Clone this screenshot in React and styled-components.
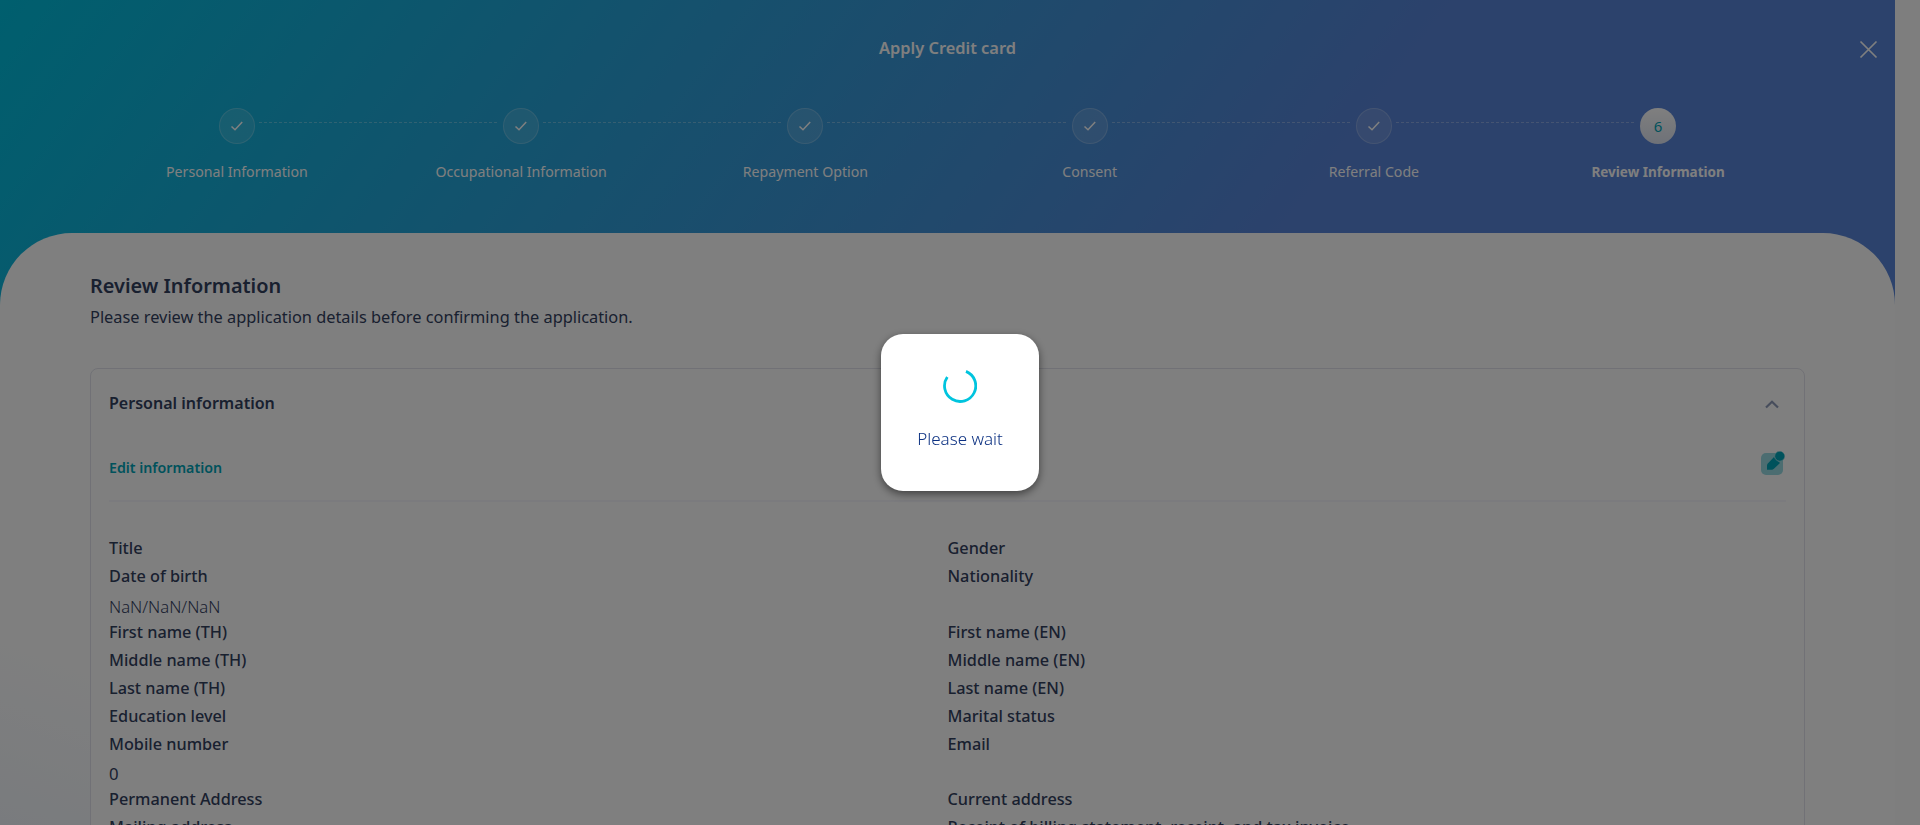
import React from 'react';
import styled, { createGlobalStyle } from 'styled-components';

const GlobalStyle = createGlobalStyle`
  *, *::before, *::after { box-sizing: border-box; }
  html, body { margin: 0; height: 100%; overflow: hidden; }
  body {
    font-family: "Noto Sans", "Open Sans", sans-serif;
    color: #33415f;
    background: #fcfcfc;
  }
`;

const Page = styled.div`
  height: 825px;
  padding-right: 25px;
  overflow: hidden;
`;

const Content = styled.div`
  height: 825px;
  overflow: hidden;
  background: linear-gradient(127deg, #00bedc 0%, #5884d8 68%) top / 100% 320px no-repeat, #fff;
`;

const Header = styled.header`
  height: 233px;
  padding-top: 35px;
  color: #fff;
`;

const TopBar = styled.div`
  display: grid;
  grid-template-columns: 60px 1fr 60px;
  align-items: center;
  height: 26px;
`;

const PageTitle = styled.h1`
  grid-column: 2;
  margin: 0;
  font-size: 16.4px;
  line-height: 24px;
  font-weight: 600;
  text-align: center;
`;

const CloseButton = styled.button`
  display: flex;
  justify-self: end;
  margin-right: 17px;
  margin-top: 2px;
  padding: 0;
  border: 0;
  background: none;
  color: #fff;
`;

const Steps = styled.ol`
  display: flex;
  margin: 47px 5% 0;
  padding: 0;
  list-style: none;
`;

const Step = styled.li`
  flex: 1;
  display: grid;
  grid-template-columns: 1fr 36px 1fr;
`;

const StepLine = styled.span`
  height: 1px;
  margin-top: 14px;
  margin-left: ${p => (p.$after ? '4px' : '0')};
  margin-right: ${p => (p.$after ? '0' : '4px')};
  background: ${p => (p.$hidden ? 'none' : 'repeating-linear-gradient(90deg, rgba(255,255,255,.3) 0 3px, transparent 3px 5px)')};
`;

const StepCircle = styled.span`
  width: 36px;
  height: 36px;
  display: flex;
  align-items: center;
  justify-content: center;
  border-radius: 50%;
  border: 1px solid ${p => (p.$active ? 'transparent' : 'rgba(255,255,255,.2)')};
  background: ${p => (p.$active ? 'linear-gradient(#fff, #dde3f0) border-box' : 'rgba(255,255,255,.12)')};
  color: ${p => (p.$active ? '#00a5b8' : '#fff')};
  font-size: 15px;
`;

const StepLabel = styled.span`
  grid-column: 1 / -1;
  margin-top: 17.5px;
  font-size: ${p => (p.$active ? '13.5px' : '14.15px')};
  font-weight: ${p => (p.$active ? 700 : 400)};
  line-height: 20px;
  text-align: center;
  white-space: nowrap;
`;

const Sheet = styled.main`
  height: 700px;
  padding: 38px 90px 0;
  border-radius: 72px 72px 0 0;
  background: linear-gradient(to top right, #f3f7fc 8%, #fff 22%);
`;

const Heading = styled.h2`
  margin: 0;
  font-size: 19.9px;
  font-weight: 600;
  line-height: 30px;
`;

const Intro = styled.p`
  margin: 2px 0 37px;
  font-size: 16.35px;
  line-height: 28px;
`;

const Card = styled.section`
  height: 600px;
  padding: 20px 18px 0;
  border: 1px solid #e2e3ec;
  border-radius: 8px;
  background: #fff;
`;

const CardHeader = styled.div`
  display: flex;
  justify-content: space-between;
  align-items: center;
  height: 28px;
  padding-right: 7px;
`;

const CardTitle = styled.h3`
  margin: 0;
  font-size: 16.05px;
  font-weight: 600;
  line-height: 28px;
`;

const EditRow = styled.div`
  display: flex;
  justify-content: space-between;
  height: 85px;
  padding-top: 34px;
  border-bottom: 2px solid #f7f7fd;
`;

const EditLink = styled.a`
  margin-top: 5px;
  color: #00a5b8;
  font-size: 14.2px;
  font-weight: 600;
  line-height: 24px;
`;

const Fields = styled.dl`
  display: grid;
  grid-template-columns: 1fr 1fr;
  align-items: start;
  margin: 32px 0 0;
`;

const Field = styled.div`
  font-size: 16.26px;
  line-height: 28px;
`;

const FieldLabel = styled.dt`
  font-weight: 500;
`;

const FieldValue = styled.dd`
  height: 27.5px;
  margin: 0;
  padding-top: 2.5px;
  font-size: 16.7px;
  font-weight: ${p => (p.$light ? 300 : 400)};
`;

const Overlay = styled.div`
  position: fixed;
  inset: 0;
  display: flex;
  align-items: center;
  justify-content: center;
  background: rgba(0, 0, 0, 0.5);
`;

const Dialog = styled.div`
  width: 158px;
  height: 157px;
  display: flex;
  flex-direction: column;
  align-items: center;
  padding-top: 35px;
  border-radius: 22px;
  background: #fff;
  box-shadow: 0 3px 9px rgba(0, 0, 0, 0.5);
`;

const DialogText = styled.p`
  margin: 22px 0 0;
  color: #0c3182;
  font-size: 17px;
  font-weight: 300;
  line-height: 28px;
`;

const steps = ['Personal Information', 'Occupational Information', 'Repayment Option', 'Consent', 'Referral Code', 'Review Information'];

const fields = [
  ['Title'], ['Gender'],
  ['Date of birth', 'NaN/NaN/NaN', true], ['Nationality'],
  ['First name (TH)'], ['First name (EN)'],
  ['Middle name (TH)'], ['Middle name (EN)'],
  ['Last name (TH)'], ['Last name (EN)'],
  ['Education level'], ['Marital status'],
  ['Mobile number', '0'], ['Email'],
  ['Permanent Address'], ['Current address'],
  ['Mailing address'], ['Receipt of billing statement, receipt, and tax invoice'],
];

const CheckIcon = () => (
  <svg width="14" height="12" viewBox="0 0 14 12" fill="none" stroke="currentColor" strokeWidth="1.5">
    <path d="M1.5 6.5 5 9.8 12.2 2" />
  </svg>
);

const CloseIcon = () => (
  <svg width="19" height="19" viewBox="0 0 19 19" fill="none" stroke="currentColor" strokeWidth="1.7">
    <path d="M1.5 1.5 17.5 17.5M17.5 1.5 1.5 17.5" />
  </svg>
);

const ChevronUp = () => (
  <svg width="14" height="11" viewBox="0 0 14 11" fill="none" stroke="#8e9bb8" strokeWidth="2.2">
    <path d="M1 9.5 7 3.8 13 9.5" />
  </svg>
);

const EditIcon = () => (
  <svg width="26" height="26" viewBox="0 0 26 26">
    <rect x="1" y="2" width="22" height="22" rx="5" fill="#98dbe3" />
    <path d="M7 18.7v-4c0-1.2.5-2 1.3-2.8L14 6l6 6-5.8 5.4c-.9.9-1.8 1.3-3 1.3z" fill="#00a5b8" />
    <circle cx="19.6" cy="5.3" r="4.9" fill="#00a5b8" stroke="#98dbe3" strokeWidth="1" />
    <circle cx="20" cy="5" r="4.3" fill="#00a5b8" />
  </svg>
);

const Spinner = () => (
  <svg width="34" height="34" viewBox="0 0 34 34" fill="none" stroke="#00c4de" strokeWidth="2.8">
    <path d="M23 2.4A15.6 15.6 0 1 1 4.3 8" />
  </svg>
);

export default function App() {
  return (
    <>
      <GlobalStyle />
      <Page>
        <Content>
          <Header>
            <TopBar>
              <PageTitle>Apply Credit card</PageTitle>
              <CloseButton aria-label="Close"><CloseIcon /></CloseButton>
            </TopBar>
            <Steps>
              {steps.map((label, i) => {
                const active = i === steps.length - 1;
                return (
                  <Step key={label}>
                    <StepLine $hidden={i === 0} />
                    <StepCircle $active={active}>{active ? i + 1 : <CheckIcon />}</StepCircle>
                    <StepLine $after $hidden={active} />
                    <StepLabel $active={active}>{label}</StepLabel>
                  </Step>
                );
              })}
            </Steps>
          </Header>
          <Sheet>
            <Heading>Review Information</Heading>
            <Intro>Please review the application details before confirming the application.</Intro>
            <Card>
              <CardHeader>
                <CardTitle>Personal information</CardTitle>
                <ChevronUp />
              </CardHeader>
              <EditRow>
                <EditLink>Edit information</EditLink>
                <EditIcon />
              </EditRow>
              <Fields>
                {fields.map(([label, value, light]) => (
                  <Field key={label}>
                    <FieldLabel>{label}</FieldLabel>
                    {value && <FieldValue $light={light}>{value}</FieldValue>}
                  </Field>
                ))}
              </Fields>
            </Card>
          </Sheet>
        </Content>
      </Page>
      <Overlay>
        <Dialog>
          <Spinner />
          <DialogText>Please wait</DialogText>
        </Dialog>
      </Overlay>
    </>
  );
}
